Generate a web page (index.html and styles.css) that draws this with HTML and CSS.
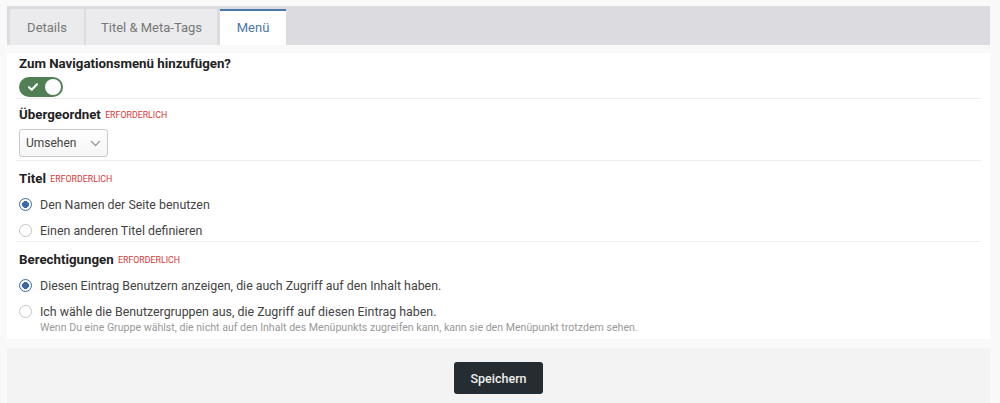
FILE: index.html
```html
<!DOCTYPE html>
<html lang="de">
<head>
<meta charset="utf-8">
<title>Menü</title>
<link rel="stylesheet" href="styles.css">
</head>
<body>
<div class="page">
  <div class="tabbar">
    <div class="tab">Details</div>
    <div class="tab">Titel &amp; Meta-Tags</div>
    <div class="tab active">Menü</div>
  </div>
  <div class="panel">
    <div class="group g1">
      <div class="label">Zum Navigationsmenü hinzufügen?</div>
      <div class="toggle">
        <svg class="check" width="10" height="8" viewBox="0 0 10 8"><path d="M1 4.2 L3.7 6.7 L9 1.3" fill="none" stroke="#fff" stroke-width="2.2" stroke-linecap="round" stroke-linejoin="round"/></svg>
        <span class="knob"></span>
      </div>
    </div>
    <div class="group g2">
      <div class="label">Übergeordnet <span class="req">Erforderlich</span></div>
      <div class="select">
        <span>Umsehen</span>
        <svg width="11" height="7" viewBox="0 0 11 7"><path d="M1 1 L5.5 5.5 L10 1" fill="none" stroke="#999" stroke-width="1.3"/></svg>
      </div>
    </div>
    <div class="group g3">
      <div class="label">Titel <span class="req">Erforderlich</span></div>
      <div class="radios">
        <div class="radio checked"><span class="dot"></span><span>Den Namen der Seite benutzen</span></div>
        <div class="radio"><span class="dot"></span><span>Einen anderen Titel definieren</span></div>
      </div>
    </div>
    <div class="group g4">
      <div class="label">Berechtigungen <span class="req">Erforderlich</span></div>
      <div class="radios">
        <div class="radio checked"><span class="dot"></span><span>Diesen Eintrag Benutzern anzeigen, die auch Zugriff auf den Inhalt haben.</span></div>
        <div class="radio"><span class="dot"></span><div><div>Ich wähle die Benutzergruppen aus, die Zugriff auf diesen Eintrag haben.</div><div class="help">Wenn Du eine Gruppe wählst, die nicht auf den Inhalt des Menüpunkts zugreifen kann, kann sie den Menüpunkt trotzdem sehen.</div></div></div>
      </div>
    </div>
  </div>
  <div class="footer">
    <button class="save">Speichern</button>
  </div>
</div>
</body>
</html>
```

FILE: styles.css
```css
* { box-sizing: border-box; }
html, body { margin: 0; padding: 0; }
body {
  background: #f9f9f9;
  font-family: Roboto, "Liberation Sans", Arial, sans-serif;
  color: #333;
  height: 403px;
  overflow: hidden;
}
.page {
  padding: 6px 10px 0 7px;
}
.tabbar {
  display: flex;
  gap: 2px;
  background: #dcdbdf;
  height: 39px;
  padding: 3px 0 0 3px;
}
.tab {
  background: #ebebed;
  color: #777;
  font-size: 13px;
  height: 36px;
  display: flex;
  align-items: center;
  justify-content: center;
  white-space: nowrap;
}
.tab:nth-child(1) { width: 74px; }
.tab:nth-child(2) { width: 131px; margin-right: 1px; }
.tab.active {
  background: #fff;
  color: #4a77a8;
  border-top: 2px solid #4a78b0;
  padding-bottom: 2px;
  width: 66px;
}
.panel {
  background: #fff;
  margin-top: 8px;
  padding: 0 9px;
  height: 286px;
}
.group {
  padding: 0 3px;
  border-bottom: 1px solid #eeeeee;
}
.group:last-child { border-bottom: none; }
.label {
  font-size: 13.3px;
  font-weight: 700;
  color: #222;
  line-height: 16px;
}
.req {
  font-size: 8.8px;
  font-weight: 400;
  color: #d9383a;
  text-transform: uppercase;
  margin-left: 1px;
  vertical-align: 1px;
}
.g1 { padding-top: 3px; height: 46px; }
.g1 .label { margin-bottom: 5px; }
.toggle {
  width: 44px;
  height: 20px;
  border-radius: 10px;
  background: #4f7f52;
  display: flex;
  align-items: center;
  justify-content: space-between;
  padding: 0 2px 0 9px;
}
.knob {
  width: 16px;
  height: 16px;
  border-radius: 50%;
  background: #fff;
}
.g2 { padding-top: 8px; height: 62px; }
.g2 .label { margin-bottom: 6px; }
.select {
  width: 89px;
  height: 28px;
  border: 1px solid #c8c8c8;
  border-radius: 3px;
  background: linear-gradient(#ffffff, #f5f5f5);
  display: flex;
  align-items: center;
  justify-content: space-between;
  padding: 0 6px 0 6px;
  font-size: 12px;
  color: #444;
}
.g3 { padding-top: 10px; height: 81px; }
.radios { margin-top: 9px; display: flex; flex-direction: column; gap: 8px; }
.radio {
  display: flex;
  align-items: flex-start;
  gap: 8px;
  font-size: 12.4px;
  color: #444;
  line-height: 18px;
}
.dot {
  width: 13px;
  height: 13px;
  border-radius: 50%;
  border: 1px solid #c4c4c4;
  background: #fff;
  margin-top: 2px;
  flex: none;
}
.radio.checked .dot {
  border: 1px solid #3e6aa3;
  background: radial-gradient(circle, #3e6aa3 0 3.2px, #fff 3.7px);
}
.g4 { padding-top: 10px; }
.g4 .radios { margin-top: 9px; }
.help {
  font-size: 10.6px;
  color: #999;
  line-height: 13px;
}
.footer {
  margin-top: 9px;
  background: #f3f3f3;
  height: 60px;
  display: flex;
  justify-content: center;
  padding-top: 14px;
}
.save {
  width: 89px;
  height: 32px;
  background: #252d33;
  color: #eee;
  border: none;
  border-radius: 3px;
  font-family: Roboto, "Liberation Sans", Arial, sans-serif;
  font-size: 12.5px;
  font-weight: 500;
}
```
